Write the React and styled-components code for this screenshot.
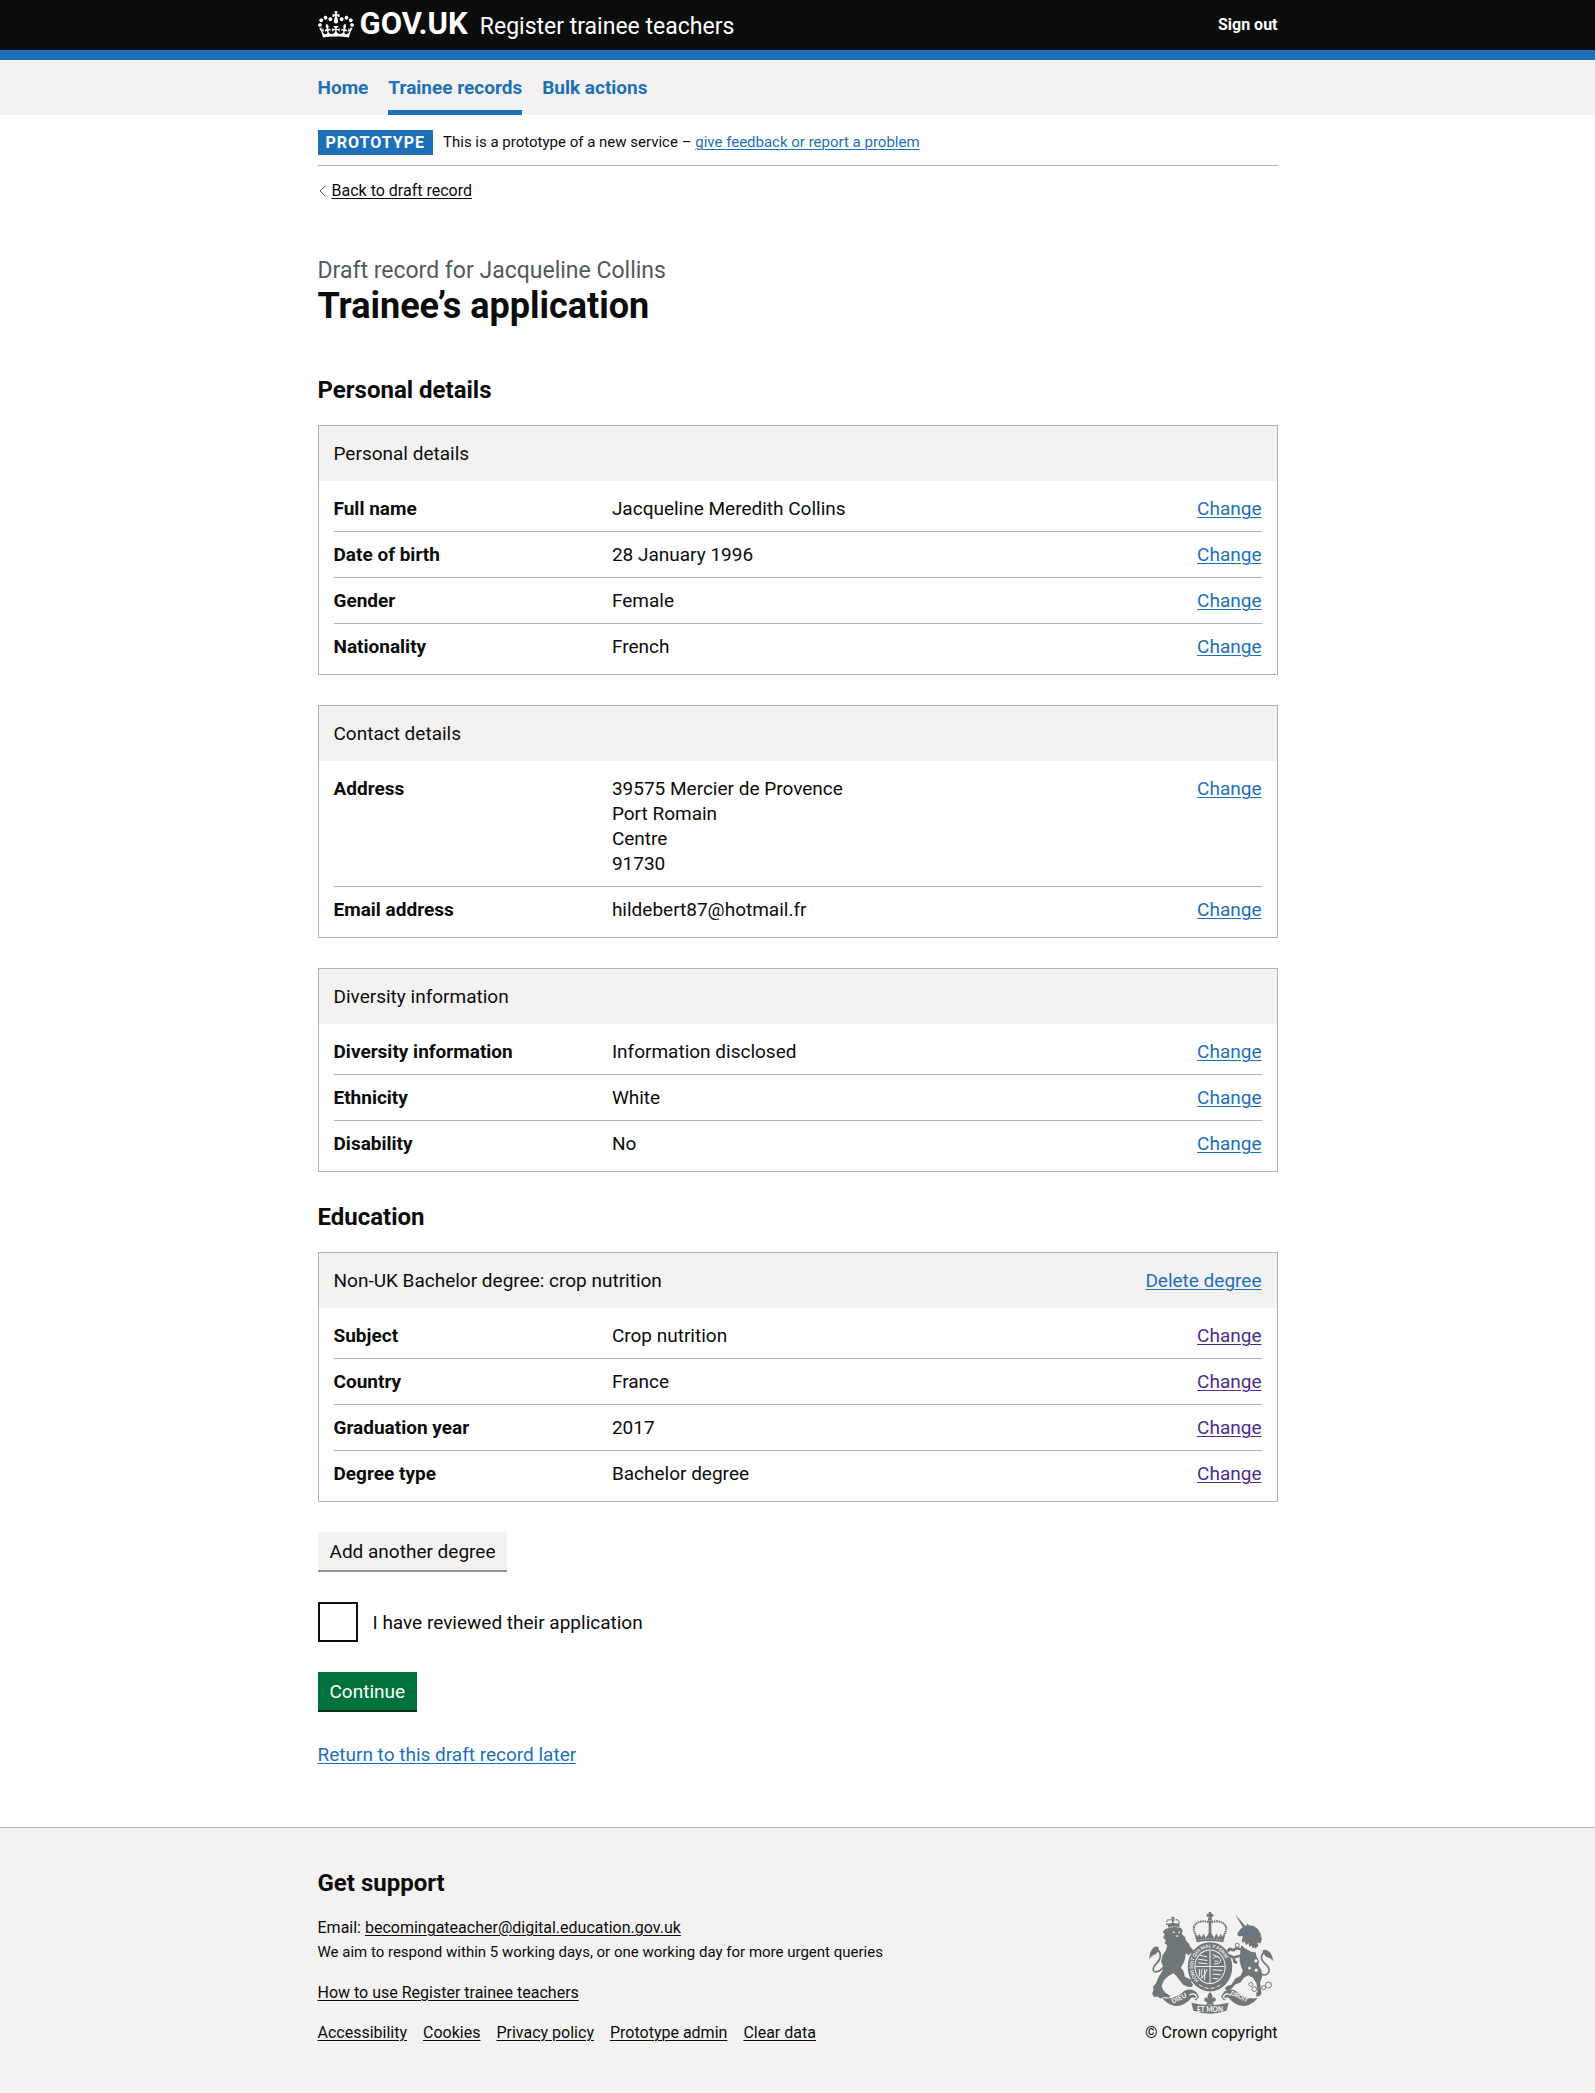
import React from "react";
import styled, { createGlobalStyle } from "styled-components";

const c = {
  text: "#0b0c0c",
  secondary: "#505a5f",
  blue: "#1d70b8",
  visited: "#4c2c92",
  grey: "#f3f2f1",
  border: "#b1b4b6",
  green: "#00703c",
  arms: "#6f777b",
};

const GlobalStyle = createGlobalStyle`
  *, *::before, *::after { box-sizing: border-box; }
  body {
    margin: 0;
    background: #fff;
    color: ${c.text};
    font-family: Roboto, "Liberation Sans", sans-serif;
    font-size: 19px;
    line-height: 25px;
  }
  h1, h2, h3, p, ul, dl, dd { margin: 0; padding: 0; }
  ul { list-style: none; }
`;

const Container = styled.div`
  max-width: 960px;
  margin: 0 auto;
`;

const Header = styled.header`
  background: ${c.text};
  border-bottom: 10px solid ${c.blue};
  color: #fff;
`;

const HeaderRow = styled(Container)`
  display: flex;
  justify-content: space-between;
  height: 50px;
`;

const Brand = styled.div`
  display: flex;
  gap: 12px;
  align-items: baseline;
  line-height: 50px;
`;

const HomeLink = styled.a`
  display: flex;
  gap: 6px;
  align-items: baseline;
  color: #fff;
  font-size: 31px;
  font-weight: 700;
  line-height: 48px;
  text-decoration: none;
  svg { align-self: center; }
`;

const ServiceLink = styled.a`
  color: #fff;
  font-size: 23px;
  text-decoration: none;
`;

const SignOut = styled.a`
  color: #fff;
  font-size: 16px;
  font-weight: 700;
  line-height: 50px;
  text-decoration: none;
`;

const Nav = styled.nav`
  background: ${c.grey};
`;

const NavList = styled.ul`
  display: flex;
  gap: 20px;
`;

const NavLink = styled.a`
  display: block;
  padding: 15px 0 10px;
  border-bottom: 5px solid ${(p) => (p.$current ? c.blue : "transparent")};
  color: ${c.blue};
  font-weight: 700;
  text-decoration: none;
`;

const PhaseBanner = styled.div`
  display: flex;
  gap: 10px;
  padding: 15px 0 10px;
  border-bottom: 1px solid ${c.border};
  font-size: 15px;
`;

const Tag = styled.strong`
  padding: 0 8px;
  background: ${c.blue};
  color: #fff;
  font-size: 16px;
  letter-spacing: 1px;
`;

const Link = styled.a`
  color: ${(p) => (p.$tone ? c[p.$tone] : c.blue)};
  text-decoration: underline;
  text-decoration-thickness: 1px;
  text-underline-offset: 2px;
`;

const BackLink = styled(Link)`
  font-size: 16px;
  line-height: 20px;
`;

const BackRow = styled.div`
  display: flex;
  align-items: center;
  gap: 6px;
  padding-top: 15px;
`;

const Main = styled.main`
  padding: 55px 0 60px;
`;

const Caption = styled.span`
  display: block;
  color: ${c.secondary};
  font-size: 23px;
  font-weight: 400;
  line-height: 30px;
`;

const PageTitle = styled.h1`
  margin-bottom: 49px;
  font-size: 36px;
  line-height: 40px;
`;

const SectionTitle = styled.h2`
  margin-bottom: ${(p) => p.$gap || 20}px;
  font-size: 24px;
  line-height: 30px;
`;

const Card = styled.section`
  margin-bottom: 30px;
  border: 1px solid ${c.border};
`;

const CardHeader = styled.header`
  display: flex;
  justify-content: space-between;
  padding: 15px;
  background: ${c.grey};
`;

const CardTitle = styled.h3`
  font-size: 19px;
  font-weight: 400;
`;

const SummaryList = styled.dl`
  padding: 15px;
`;

const SummaryRow = styled.div`
  display: grid;
  grid-template-columns: 30% 1fr auto;
  padding: 10px 0;
  border-bottom: 1px solid ${c.border};
  &:first-child { padding-top: 0; }
  &:last-child { padding-bottom: 0; border-bottom: 0; }
`;

const Key = styled.dt`
  font-weight: 700;
`;

const Value = styled.dd`
  white-space: pre-line;
`;

const Form = styled.form`
  display: flex;
  flex-direction: column;
  align-items: flex-start;
  gap: 30px;
`;

const Button = styled.button`
  height: 40px;
  padding: 0 12px;
  border: 0;
  border-bottom: 2px solid ${(p) => (p.$secondary ? "#929191" : "#002d18")};
  background: ${(p) => (p.$secondary ? c.grey : c.green)};
  color: ${(p) => (p.$secondary ? c.text : "#fff")};
  font: inherit;
  cursor: pointer;
`;

const CheckLabel = styled.label`
  display: flex;
  align-items: center;
  gap: 15px;
`;

const Checkbox = styled.input`
  appearance: none;
  width: 40px;
  height: 40px;
  margin: 0;
  border: 2px solid ${c.text};
  background: #fff;
  &:checked { box-shadow: inset 0 0 0 8px #fff; background: ${c.text}; }
`;

const Footer = styled.footer`
  padding: 40px 0 48px;
  border-top: 1px solid ${c.border};
  background: ${c.grey};
  font-size: 16px;
`;

const FooterRow = styled(Container)`
  display: flex;
  justify-content: space-between;
  align-items: flex-end;
`;

const FooterText = styled.div`
  display: flex;
  flex-direction: column;
  gap: 15px;
`;

const SupportNote = styled.p`
  font-size: 15px;
`;

const FooterLinks = styled.ul`
  display: flex;
  gap: 16px;
`;

const Copyright = styled.a`
  display: flex;
  flex-direction: column;
  align-items: center;
  gap: 6px;
  color: ${c.text};
  text-decoration: none;
`;

function Crown() {
  return (
    <svg width="36" height="27" viewBox="0 0 132 97" fill="currentColor" aria-hidden="true">
      <path d="M25 30.2c3.5 1.5 7.7-.2 9.1-3.7 1.5-3.6-.2-7.8-3.9-9.2-3.6-1.4-7.6.3-9.1 3.9-1.4 3.5.3 7.5 3.9 9zM9 39.5c3.6 1.5 7.8-.2 9.2-3.7 1.5-3.6-.2-7.8-3.9-9.1-3.6-1.5-7.6.2-9.1 3.8-1.4 3.5.3 7.5 3.8 9zM4.4 57.2c3.5 1.5 7.7-.2 9.1-3.8 1.5-3.6-.2-7.7-3.9-9.1-3.5-1.5-7.6.3-9.1 3.8-1.4 3.5.3 7.6 3.9 9.1zm38.3-21.4c3.5 1.5 7.7-.2 9.1-3.8 1.5-3.6-.2-7.7-3.9-9.1-3.6-1.5-7.6.3-9.1 3.8-1.3 3.6.4 7.7 3.9 9.1zm64.4-5.6c-3.6 1.5-7.8-.2-9.1-3.7-1.5-3.6.2-7.8 3.8-9.2 3.6-1.4 7.7.3 9.2 3.9 1.3 3.5-.4 7.5-3.9 9zm15.9 9.3c-3.6 1.5-7.7-.2-9.1-3.7-1.5-3.6.2-7.8 3.7-9.1 3.6-1.5 7.7.2 9.2 3.8 1.5 3.5-.3 7.5-3.8 9zm4.7 17.7c-3.6 1.5-7.8-.2-9.2-3.8-1.5-3.6.2-7.7 3.9-9.1 3.6-1.5 7.7.3 9.2 3.8 1.3 3.5-.4 7.6-3.9 9.1zM89.3 35.8c-3.6 1.5-7.8-.2-9.2-3.8-1.4-3.6.2-7.7 3.9-9.1 3.6-1.5 7.7.3 9.2 3.8 1.4 3.6-.3 7.7-3.9 9.1zM69.7 17.7l8.9 4.7V9.3l-8.9 2.8c-.2-.3-.5-.6-.9-.9L72.4 0H59.6l3.5 11.2c-.3.3-.6.5-.9.9l-8.8-2.8v13.1l8.8-4.7c.3.3.6.7.9.9l-5 15.4v.1c-.2.8-.4 1.6-.4 2.4 0 4.1 3.1 7.5 7 8.1h.2c.3 0 .7.1 1 .1.4 0 .7 0 1-.1h.2c4-.6 7.1-4.1 7.1-8.1 0-.8-.1-1.7-.4-2.4V34l-5.1-15.4c.4-.2.7-.6 1-.9zM66 92.8c16.9 0 32.8 1.1 47.1 3.2 4-16.9 8.9-26.7 14-33.5l-9.6-3.4c1 4.9 1.1 7.2 0 10.2-1.5-1.4-3-4.3-4.2-8.7L108.6 76c2.8-2 5-3.2 7.5-3.3-4.4 9.4-10 11.9-13.6 11.2-4.3-.8-6.3-4.6-5.6-7.9 1-4.7 5.7-5.9 8-.5 4.3-8.7-3-11.4-7.6-8.8 7.1-7.2 7.9-13.5 2.1-21.1-8 6.1-8.1 12.3-4.5 20.8-4.7-5.4-12.1-2.5-9.5 6.2 3.4-5.2 7.9-2 7.2 3.1-.6 4.3-6.4 7.8-13.5 7.2-10.3-.9-10.9-8-11.2-13.8 2.5-.5 7.1 1.8 11 7.3L80.2 60c-4.1 4.4-8 5.3-12.3 5.4 1.4-4.4 8-11.6 8-11.6H55.5s6.4 7.2 7.9 11.6c-4.2-.1-8-1-12.3-5.4l1.4 16.4c3.9-5.5 8.5-7.7 10.9-7.3-.3 5.8-.9 12.8-11.1 13.8-7.2.6-12.9-2.9-13.5-7.2-.7-5 3.8-8.3 7.1-3.1 2.7-8.7-4.6-11.6-9.4-6.2 3.7-8.5 3.6-14.7-4.6-20.8-5.8 7.6-5 13.9 2.2 21.1-4.7-2.6-11.9.1-7.7 8.8 2.3-5.5 7.1-4.2 8.1.5.7 3.3-1.3 7.1-5.7 7.9-3.5.7-9-1.8-13.5-11.2 2.5.1 4.7 1.3 7.5 3.3l-4.7-15.4c-1.2 4.4-2.7 7.2-4.3 8.7-1.1-3-.9-5.3 0-10.2l-9.5 3.4c5 6.9 9.9 16.7 14 33.5 14.8-2.1 30.8-3.2 47.7-3.2z" />
    </svg>
  );
}

function RoyalArms() {
  const motto = { fill: c.grey, fontFamily: "Lato, sans-serif", fontWeight: 900 };
  return (
    <svg width="125" height="102" viewBox="90 93 375 307" fill={c.arms} aria-hidden="true">
      {/* lion */}
      <g fill="none" stroke={c.arms} strokeWidth="4">
        <path d="M144 132q-5-16 8-16 9 0 9 8 0-8 9-8 13 0 9 14" strokeDasharray="5 2" />
        <path d="M161 107v20M156 111h10" />
      </g>
      <path d="M145 128q17-4 35 0l2 10q-20-4-35 2z" />
      <path d="M139 144q24-10 46-3l6 8-3 11 10 8 2 10 9 10 6 12 9 8-1 9-9 0-5 7-9-7-2 16-5 14-8 14 8 9 4 18 13 6 9 4-3 6 6 7-4 8-12-1-14-6-10-13-10-13-9-9-14 8-14 13-8 17 5 13 8 9 14 8-4 6-14-2-12 4-10-6-10 2-5-11 4-12-2-7 10-12 6-16 12-19 3-14-6-16 4-18 11-17 3-14-8-6 4-9-8-8 5-10-7-7z" />
      <path d="M160 150l9 4-7 3zM176 154l9-3-4 6zM169 164l10 0-5 5z" fill={c.grey} />
      <path d="M141 248q-20 30-36 24-9-8 8-25 13-14 10-28-3-10-10-12" fill="none" stroke={c.arms} strokeWidth="5" />
      <path d="M119 199q-14-6-21 7-9 11-7 30 6-12 15-14 13-7 13-23z" />
      {/* unicorn */}
      <path d="M348 99l31 36-7 5z" />
      <path d="M370 140l12-6 3-6 6 5 14 2 12 9 8 14 4 17-4 13-9-3 2 10-8 8q-22-1-42-22l4-16-10 2-7-5 2-8 7-8z" />
      <path d="M367 192q20 21 44 23l2 12 7 12-1 14 9 16 2 18-6 18 2 18 2 16-6 7-9 2-1-10 4-8-3-22-10-16-14-9-14 8-10 14-16 6-12 14-11 5-9-6 8-9 13-4 10-17 17-9 7-15-6-14-4-18 1-14z" />
      <g fill="none" stroke={c.arms} strokeWidth="8" strokeLinejoin="round">
        <path d="M370 206l-18-4-8 6-12-4-6 8M366 224l-22 6-14-7M344 230l3 13 8 3" />
      </g>
      <path d="M364 191l2-10 6 8 5-9 4 13 8-7 2 12 8-5 1 9 9-3-1 8q-24-2-44-16z" fill={c.grey} />
      <path d="M419 276q22 14 31-2 4-12-10-24t-12-24q3-10 12-13" fill="none" stroke={c.arms} strokeWidth="5" />
      <path d="M431 208q13-5 22 6 9 10 11 28-8-10-16-12-12-3-17-22z" />
      <g fill={c.grey}>
        <circle cx="411" cy="240" r="5" /><circle cx="392" cy="262" r="4" /><circle cx="412" cy="268" r="5" />
      </g>
      <g fill="none" stroke={c.arms} strokeWidth="3">
        <circle cx="355" cy="193" r="6" /><circle cx="396" cy="311" r="6" /><circle cx="406" cy="325" r="7" /><circle cx="434" cy="321" r="6" /><circle cx="449" cy="313" r="9" />
      </g>
      {/* imperial crown */}
      <path d="M269 93h8v6h6v8h-6l3 12h-14l3-12h-6v-8h6z" />
      <path d="M269 120h8v50h-8z" />
      <g fill="none" stroke={c.arms} strokeWidth="6" strokeDasharray="5 2">
        <path d="M269 123q-38-8-45 18 0 12 12 31" />
        <path d="M277 123q38-8 45 18 0 12-12 31" />
      </g>
      <path d="M233 184l-6-24 10 8 3-10 7 12 7-12 6 13 9-14h8l9 14 6-13 7 12 7-12 3 10 10-8-6 24q-40-8-80 0z" />
      <path d="M236 178q37-8 74 0" fill="none" stroke={c.grey} strokeWidth="2" strokeDasharray="4 4" />
      {/* garter and shield */}
      <ellipse cx="273" cy="258" rx="67" ry="74" />
      <ellipse cx="273" cy="258" rx="47" ry="52" fill={c.grey} />
      <ellipse cx="273" cy="258" rx="44" ry="49" />
      <path d="M273 209v98M229 257h88" stroke={c.grey} strokeWidth="3" />
      <g fill="none" stroke={c.grey} strokeWidth="3">
        <path d="M242 223l22 5M238 235l27 4M237 246l28 3M281 221l20 9M281 234q12-15 24 2 1 14-20 13M286 241h12" />
        <path d="M241 265v22M249 264q-5 15 2 29M257 264v34M265 265q-8 22-21 28M281 267l28 2M281 280l24 2M281 293l17 1" />
      </g>
      <path id="garter" d="M239 300A51 57 0 1 1 307 300" fill="none" />
      <text {...motto} fontSize="14">
        <textPath href="#garter">HONI SOIT QUI MAL Y PENSE</textPath>
      </text>
      <path d="M240 311q32 24 66 0" fill="none" stroke={c.grey} strokeWidth="3" strokeDasharray="12 7" />
      {/* motto scroll */}
      <path d="M130 352q39 6 66-22 18-9 35 3l9 15-9 11-13-9q-27 32-59 24-18-6-29-22z" />
      <path d="M416 352q-39 6-66-22-18-9-35 3l-9 15 9 11 13-9q27 32 59 24 18-6 29-22z" />
      <path d="M217 366q56 15 112 0l-6 24q-50 18-100 0z" />
      <path d="M211 343q15-9 22 5-5 10-14 3M335 343q-15-9-22 5 5 10 14 3" fill="none" stroke={c.grey} strokeWidth="4" />
      <text {...motto} fontSize="20" transform="translate(161 369) rotate(-25)">DIEU</text>
      <text {...motto} fontSize="20" x="234" y="393">ET MON</text>
      <text {...motto} fontSize="18" transform="translate(333 341) rotate(25)">DROIT</text>
      <path d="M273 334q13 12 4 22 8-12 13-2 3 9-9 10l4 8h-24l4-8q-12-1-9-10 5-10 13 2-9-10 4-22z" />
    </svg>
  );
}

const personalCards = [
  {
    title: "Personal details",
    rows: [
      ["Full name", "Jacqueline Meredith Collins"],
      ["Date of birth", "28 January 1996"],
      ["Gender", "Female"],
      ["Nationality", "French"],
    ],
  },
  {
    title: "Contact details",
    rows: [
      ["Address", "39575 Mercier de Provence\nPort Romain\nCentre\n91730"],
      ["Email address", "hildebert87@hotmail.fr"],
    ],
  },
  {
    title: "Diversity information",
    rows: [
      ["Diversity information", "Information disclosed"],
      ["Ethnicity", "White"],
      ["Disability", "No"],
    ],
  },
];

const degree = {
  title: "Non-UK Bachelor degree: crop nutrition",
  action: "Delete degree",
  tone: "visited",
  rows: [
    ["Subject", "Crop nutrition"],
    ["Country", "France"],
    ["Graduation year", "2017"],
    ["Degree type", "Bachelor degree"],
  ],
};

function SummaryCard({ title, action, rows, tone }) {
  return (
    <Card>
      <CardHeader>
        <CardTitle>{title}</CardTitle>
        {action && <Link href="#delete">{action}</Link>}
      </CardHeader>
      <SummaryList>
        {rows.map(([key, value]) => (
          <SummaryRow key={key}>
            <Key>{key}</Key>
            <Value>{value}</Value>
            <dd>
              <Link href="#change" $tone={tone}>Change</Link>
            </dd>
          </SummaryRow>
        ))}
      </SummaryList>
    </Card>
  );
}

export default function App() {
  return (
    <>
      <GlobalStyle />
      <Header>
        <HeaderRow>
          <Brand>
            <HomeLink href="#govuk">
              <Crown />
              <span>GOV.UK</span>
            </HomeLink>
            <ServiceLink href="#service">Register trainee teachers</ServiceLink>
          </Brand>
          <SignOut href="#sign-out">Sign out</SignOut>
        </HeaderRow>
      </Header>
      <Nav>
        <Container>
          <NavList>
            <li><NavLink href="#home">Home</NavLink></li>
            <li><NavLink href="#records" $current aria-current="page">Trainee records</NavLink></li>
            <li><NavLink href="#bulk">Bulk actions</NavLink></li>
          </NavList>
        </Container>
      </Nav>
      <Container>
        <PhaseBanner>
          <Tag>PROTOTYPE</Tag>
          <span>
            This is a prototype of a new service – <Link href="#feedback">give feedback or report a problem</Link>
          </span>
        </PhaseBanner>
        <BackRow>
          <svg width="8" height="12" viewBox="0 0 8 12" fill="none" stroke={c.secondary} aria-hidden="true">
            <path d="M7 1L2 6l5 5" />
          </svg>
          <BackLink href="#back" $tone="text">Back to draft record</BackLink>
        </BackRow>
        <Main>
          <PageTitle>
            <Caption>Draft record for Jacqueline Collins</Caption>
            Trainee’s application
          </PageTitle>
          <SectionTitle>Personal details</SectionTitle>
          {personalCards.map((card) => (
            <SummaryCard key={card.title} {...card} />
          ))}
          <SectionTitle>Education</SectionTitle>
          <SummaryCard {...degree} />
          <Form onSubmit={(e) => e.preventDefault()}>
            <Button type="button" $secondary>Add another degree</Button>
            <CheckLabel>
              <Checkbox type="checkbox" name="reviewed" />
              I have reviewed their application
            </CheckLabel>
            <Button type="submit">Continue</Button>
            <Link href="#return">Return to this draft record later</Link>
          </Form>
        </Main>
      </Container>
      <Footer>
        <FooterRow>
          <FooterText>
            <SectionTitle $gap={2}>Get support</SectionTitle>
            <div>
              <p>
                Email: <Link href="#email" $tone="text">becomingateacher@digital.education.gov.uk</Link>
              </p>
              <SupportNote>We aim to respond within 5 working days, or one working day for more urgent queries</SupportNote>
            </div>
            <p><Link href="#how-to" $tone="text">How to use Register trainee teachers</Link></p>
            <FooterLinks>
              {["Accessibility", "Cookies", "Privacy policy", "Prototype admin", "Clear data"].map((t) => (
                <li key={t}><Link href="#footer" $tone="text">{t}</Link></li>
              ))}
            </FooterLinks>
          </FooterText>
          <Copyright href="#copyright">
            <RoyalArms />
            © Crown copyright
          </Copyright>
        </FooterRow>
      </Footer>
    </>
  );
}
